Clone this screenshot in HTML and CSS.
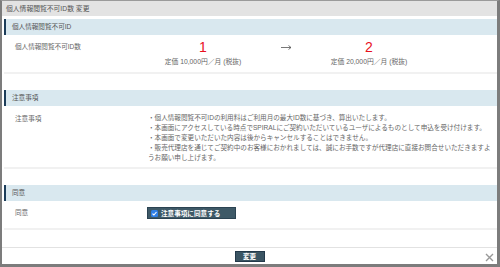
FILE: index.html
```html
<!DOCTYPE html>
<html lang="ja">
  <head>
    <meta charset="UTF-8" />
    <meta name="viewport" content="width=device-width, initial-scale=1.0" />
    <title>個人情報閲覧不可ID数 変更</title>
    <link rel="stylesheet" href="styles.css">
  </head>
  <body>
    <div class="dialog">
      <header class="dialog-title">個人情報閲覧不可ID数 変更</header>
      <main class="dialog-body">
        <section class="block">
          <h2 class="block-head">個人情報閲覧不可ID</h2>
          <div class="row row-id">
            <div class="row-label">個人情報閲覧不可ID数</div>
            <div class="row-value plan">
              <div class="plan-item">
                <div class="plan-num">1</div>
                <div class="plan-price">定価 10,000円／月 (税抜)</div>
              </div>
              <div class="plan-arrow">
                <svg width="11" height="5" viewBox="0 0 11 5"><path d="M0 2.5 H10 M7.5 0.5 L10 2.5 L7.5 4.5" fill="none" stroke="#555" stroke-width="0.8"/></svg>
              </div>
              <div class="plan-item">
                <div class="plan-num">2</div>
                <div class="plan-price">定価 20,000円／月 (税抜)</div>
              </div>
            </div>
          </div>
        </section>
        <section class="block">
          <h2 class="block-head">注意事項</h2>
          <div class="row row-notes">
            <div class="row-label">注意事項</div>
            <div class="row-value notes">
              <p>・個人情報閲覧不可IDの利用料はご利用月の最大ID数に基づき、算出いたします。</p>
              <p>・本画面にアクセスしている時点でSPIRALにご契約いただいているユーザによるものとして申込を受け付けます。</p>
              <p>・本画面で変更いただいた内容は後からキャンセルすることはできません。</p>
              <p>・販売代理店を通じてご契約中のお客様におかれましては、誠にお手数ですが代理店に直接お問合せいただきますようお願い申し上げます。</p>
            </div>
          </div>
        </section>
        <section class="block">
          <h2 class="block-head">同意</h2>
          <div class="row row-agree">
            <div class="row-label">同意</div>
            <div class="row-value">
              <label class="agree">
                <span class="agree-box">
                  <svg width="7" height="7" viewBox="0 0 7 7"><path d="M1.5 3.6 L2.9 5 L5.5 2" fill="none" stroke="#fff" stroke-width="1.1"/></svg>
                </span>
                注意事項に同意する
              </label>
            </div>
          </div>
        </section>
      </main>
      <footer class="dialog-foot">
        <span></span>
        <button type="button" class="btn-submit">変更</button>
        <span class="close">
          <svg width="9" height="9" viewBox="0 0 9 9"><path d="M1 1 L8 8 M8 1 L1 8" stroke="#999" stroke-width="1.4"/></svg>
        </span>
      </footer>
    </div>
  </body>
</html>
```

FILE: styles.css
```css
* {
  margin: 0;
  padding: 0;
  box-sizing: border-box;
}
body {
  width: 100vw;
  height: 100vh;
  background-color: #fff;
  font-family: "Liberation Sans", "Noto Sans CJK JP", sans-serif;
  font-size: 6.6px;
  color: #555;
}
.dialog {
  height: 100vh;
  display: flex;
  flex-flow: column;
  border-top: 1px solid #9a9a9a;
  border-left: 2px solid #7c7c7c;
  border-right: 3px solid #7c7c7c;
  border-bottom: 3px solid #7c7c7c;
}
.dialog-title {
  height: 15px;
  line-height: 15px;
  padding-left: 4px;
  background-color: #e3e3e3;
  font-size: 6.8px;
  color: #555;
}
.dialog-body {
  flex: 1;
  padding: 3px 0 0 2px;
}
.block {
  border-bottom: 2px solid #f1f1f1;
  margin-bottom: 16px;
}
.block-head {
  height: 16px;
  line-height: 16px;
  padding-left: 6px;
  border-left: 2px solid #1c3d5a;
  background-color: #d9e8ef;
  font-size: 6.6px;
  font-weight: normal;
  color: #555;
}
.row {
  display: grid;
  grid-template-columns: 133px 1fr;
  padding: 6px 4px 5px 11px;
}
.row-label {
  line-height: 12px;
  color: #666;
}
/* 個人情報閲覧不可ID数 */
.plan {
  display: grid;
  grid-template-columns: 110px 56px 110px;
  text-align: center;
}
.plan-num {
  font-size: 14px;
  line-height: 13px;
  color: #e8101e;
}
.plan-price {
  margin-top: 3px;
  line-height: 10px;
  font-size: 6.8px;
  color: #666;
}
.plan-arrow {
  height: 13px;
  display: flex;
  align-items: center;
  justify-content: center;
}
/* 注意事項 */
.row-notes {
  padding: 7px 4px 4px 11px;
}
.notes {
  line-height: 10px;
  color: #666;
}
/* 同意 */
.row-agree {
  padding: 6px 4px 9px 11px;
}
.agree {
  display: inline-flex;
  align-items: center;
  gap: 3px;
  width: 89px;
  height: 12px;
  margin-left: -1px;
  padding-left: 3px;
  background-color: #3e5967;
  border: 1px solid #2b4352;
  color: #fff;
  font-weight: bold;
  cursor: pointer;
}
.agree-box {
  display: inline-flex;
  width: 7px;
  height: 7px;
  border-radius: 1.5px;
  background-color: #2f7fe6;
}
.dialog-foot {
  height: 17px;
  border-top: 1px solid #e2e2e2;
  display: grid;
  grid-template-columns: 1fr auto 1fr;
  align-items: center;
}
.btn-submit {
  width: 30px;
  height: 11px;
  border: 1px solid #23394a;
  background-color: #3b5563;
  color: #fff;
  font-family: inherit;
  font-size: 6.6px;
  font-weight: bold;
  line-height: 9px;
  cursor: pointer;
}
.close {
  justify-self: end;
  display: inline-flex;
  margin-right: 3px;
  margin-top: 3px;
}
```
